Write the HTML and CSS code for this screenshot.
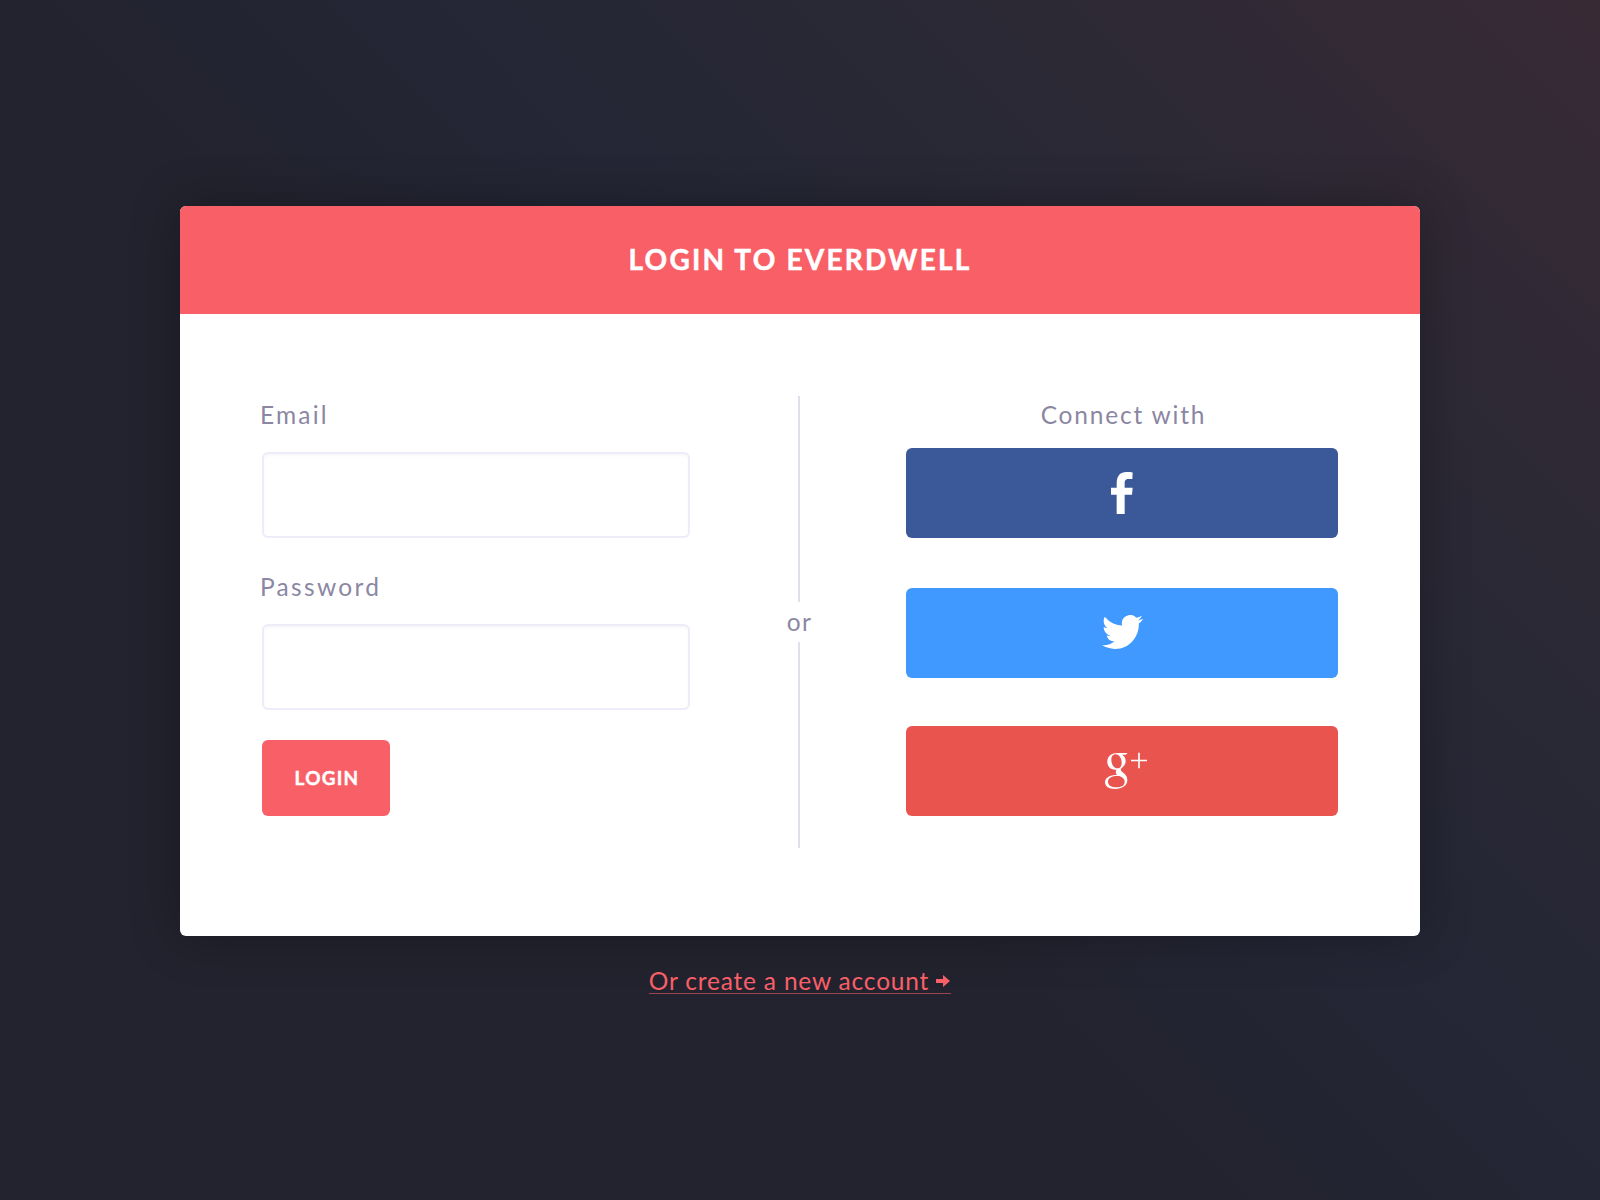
FILE: index.html
```html
<!DOCTYPE html>
<html lang="en">
<head>
<meta charset="utf-8">
<title>Login to Everdwell</title>
<link rel="stylesheet" href="styles.css">
</head>
<body>
<main class="card">
  <header class="card-header"><h1 class="title">LOGIN TO EVERDWELL</h1></header>
  <div class="card-body">
    <form class="login-form">
      <label class="label label-email" for="email">Email</label>
      <input class="field" id="email" type="email">
      <label class="label label-password" for="password">Password</label>
      <input class="field" id="password" type="password">
      <button class="login-button" type="button">LOGIN</button>
    </form>
    <div class="divider"><span class="divider-text">or</span></div>
    <section class="social">
      <h2 class="label label-connect">Connect with</h2>
      <a class="social-button facebook" aria-label="Facebook">
        <svg width="22" height="42" viewBox="0 0 66 126" fill="#fff"><path d="M17 126V68H0V47H17V34C17 11 28 0 46 0c8 0 14 .5 19 1.500L64 21H53C43 21 41 26 41 34V47H65L63 68H41V126z"/></svg>
      </a>
      <a class="social-button twitter" aria-label="Twitter">
        <svg width="41" height="34" viewBox="0 2.2 24 19.6" preserveAspectRatio="none" fill="#fff"><path d="M23.953 4.57a10 10 0 01-2.825.775 4.958 4.958 0 002.163-2.723c-.951.555-2.005.959-3.127 1.184a4.92 4.92 0 00-8.384 4.482C7.69 8.095 4.067 6.13 1.64 3.162a4.822 4.822 0 00-.666 2.475c0 1.71.87 3.213 2.188 4.096a4.904 4.904 0 01-2.228-.616v.06a4.923 4.923 0 003.946 4.827 4.996 4.996 0 01-2.212.085 4.936 4.936 0 004.604 3.417 9.867 9.867 0 01-6.102 2.105c-.39 0-.779-.023-1.17-.067a13.995 13.995 0 007.557 2.209c9.053 0 13.998-7.496 13.998-13.985 0-.21 0-.42-.015-.63A9.935 9.935 0 0024 4.59z"/></svg>
      </a>
      <a class="social-button google" aria-label="Google Plus">
        <svg width="42" height="37" viewBox="0 0 126 111" fill="#fff"><path fill-rule="evenodd" d="M68 3L62 8H51C59 13 62 19 62 27C62 37 57 42 51 47C47 50 46 53 49 57C53 62 67 68 67 84C67 100 52 111 30 111C12 111 0 104 0 91C0 77 14 69 36 68C32 64 31 59 34 53C17 55 7 43 7 29C7 13 20 3 37 3zM32 7C23 7 19 14 19 23C19 36 26 49 37 49C46 49 50 42 50 33C50 20 43 7 32 7zM38 72C20 72 9 78 9 89C9 100 20 106 34 106C49 106 59 100 59 89C59 80 52 76 43 72z"/><path d="M99.500 2H104.500V23H126V28H104.500V49H99.500V28H78V23H99.500z"/></svg>
      </a>
    </section>
  </div>
</main>
<a class="create-link"><span class="create-text">Or create a new account</span><svg width="14" height="12" viewBox="0 0 14 12" fill="#f95f66"><path d="M0 4H7V0L14 6L7 12V8H0z"/></svg></a>
</body>
</html>
```
FILE: styles.css
```css
* { box-sizing: border-box; }
body {
  margin: 0;
  width: 1600px;
  height: 1200px;
  padding-top: 206px;
  display: flex;
  flex-direction: column;
  align-items: center;
  overflow: hidden;
  font-family: Lato, "Liberation Sans", sans-serif;
  background: linear-gradient(45deg, #23232f 0%, #23232f 44%, #242635 57%, #292835 73%, #2f2935 85%, #382a35 100%);
}
.card {
  width: 1240px;
  height: 730px;
  border-radius: 6px;
  background: #fff;
  overflow: hidden;
  box-shadow: 0 0 50px rgba(0, 0, 0, .3);
}
.card-header {
  height: 108px;
  display: flex;
  justify-content: center;
  background: #f95f66;
}
.title {
  margin: 35px 0 0;
  font-size: 28px;
  line-height: 36px;
  font-weight: 700;
  letter-spacing: 2.2px;
  -webkit-text-stroke: .5px #fff;
  color: #fff;
}
.card-body {
  display: flex;
  justify-content: space-between;
  padding: 82px 82px 0;
}
.login-form {
  width: 428px;
  display: flex;
  flex-direction: column;
  align-items: flex-start;
}
.label {
  margin: 0;
  font-size: 24.5px;
  line-height: 30px;
  font-weight: 400;
  color: #8b87a3;
}
.label-email { margin: 4px 0 22px -2px; letter-spacing: 2.2px; }
.label-password { margin: 34px 0 22px -2px; letter-spacing: 2.3px; }
.field {
  width: 428px;
  height: 86px;
  border: 2px solid #edecf9;
  border-radius: 6px;
  padding: 0 20px;
  font: inherit;
  font-size: 24px;
  background: #fff;
  box-shadow: inset 0 2px 2px rgba(30, 30, 60, .03);
  outline: none;
}
.login-button {
  width: 128px;
  height: 76px;
  margin-top: 30px;
  padding: 0 0 0 2px;
  border: 0;
  border-radius: 6px;
  background: #f95f66;
  color: #fff;
  font: 700 19px/24px Lato, "Liberation Sans", sans-serif;
  letter-spacing: 1.2px;
  -webkit-text-stroke: .4px #fff;
}
.divider {
  width: 40px;
  height: 452px;
  margin-left: 2px;
  display: flex;
  flex-direction: column;
  align-items: center;
}
.divider::before, .divider::after {
  content: "";
  width: 2px;
  height: 206px;
  background: #e0dfee;
}
.divider-text {
  height: 40px;
  padding-left: 1px;
  font-size: 24.5px;
  line-height: 40px;
  letter-spacing: 1.4px;
  color: #8b87a3;
}
.social {
  width: 432px;
  display: flex;
  flex-direction: column;
}
.label-connect {
  margin: 4px 0 18px;
  padding-left: 3px;
  text-align: center;
  letter-spacing: 1.8px;
}
.social-button {
  height: 90px;
  border-radius: 6px;
  display: flex;
  align-items: center;
  justify-content: center;
}
.facebook { background: #3b5899; }
.twitter { background: #4099ff; margin: 50px 0 48px; padding: 0 0 2px 1px; }
.google { background: #e9544f; padding: 0 0 2px 8px; }
.create-link {
  height: 35px;
  margin-top: 23px;
  padding: 10px 1px 0 0;
  display: flex;
  align-items: center;
  gap: 7px;
  border-bottom: 1px solid #9c4550;
  color: #f95f66;
}
.create-text {
  font-size: 24.5px;
  line-height: 30px;
  letter-spacing: .8px;
}
```
